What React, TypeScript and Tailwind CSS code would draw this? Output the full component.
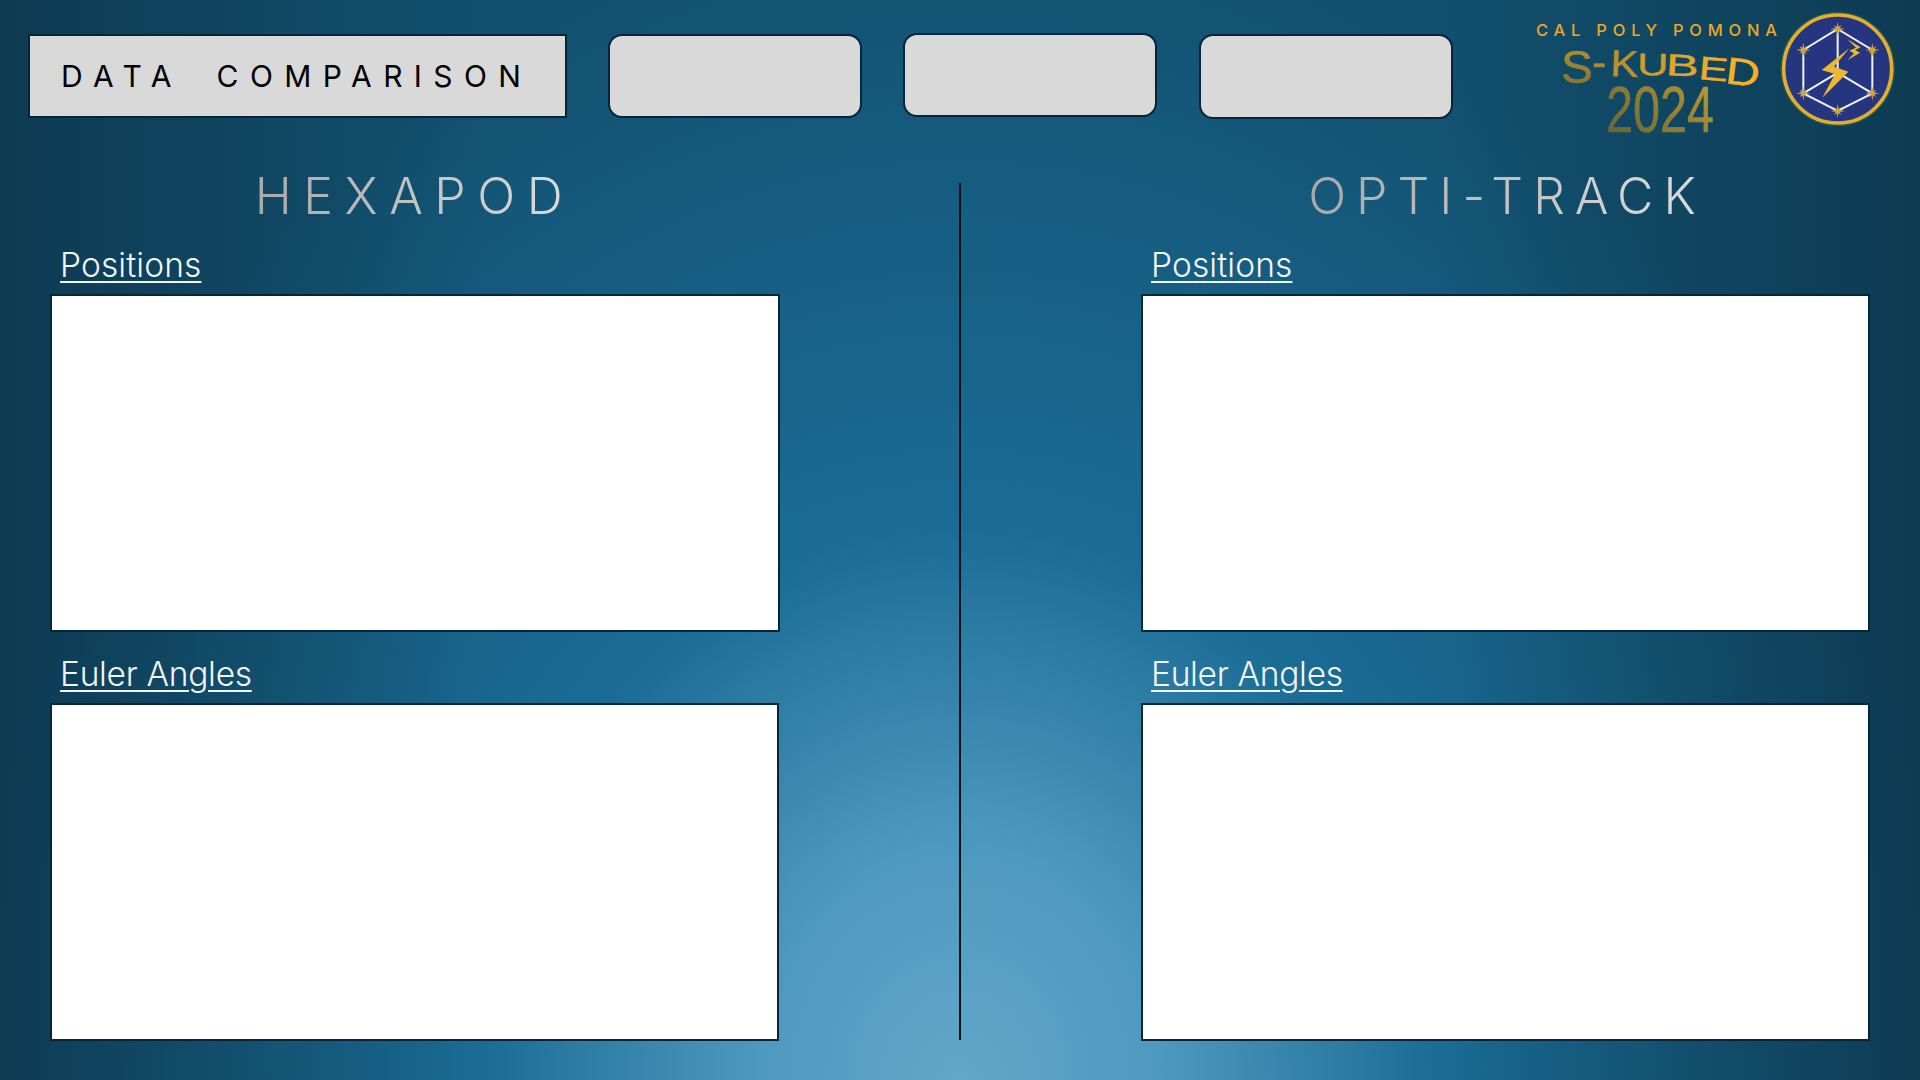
import React from "react";

// letras do S-KUBED: cada uma esticada para imitar o texto deformado
const kubedLetters = [
  { ch: "S", x: 31, y: 83, sx: 1.18, sy: 1.14, rot: 0, fill: "url(#kubedS)" },
  { ch: "-", x: 62, y: 76, sx: 1.05, sy: 1, rot: 0, fill: "#a98a30" },
  { ch: "K", x: 80, y: 76, sx: 1.05, sy: 0.93, rot: 2, fill: "#b8932d" },
  { ch: "U", x: 107, y: 75, sx: 1.08, sy: 0.78, rot: 1, fill: "#cd9e2a" },
  { ch: "B", x: 135.5, y: 75, sx: 1.23, sy: 0.76, rot: 3, fill: "#e0a728" },
  { ch: "E", x: 168, y: 79, sx: 1.1, sy: 0.82, rot: 5, fill: "#eeac26" },
  { ch: "D", x: 194.5, y: 83, sx: 1.18, sy: 0.94, rot: 7, fill: "#f5b025" },
];

const hexVertices = [
  [233, 87],
  [337, 150],
  [337, 280],
  [233, 333],
  [130, 280],
  [130, 150],
];

// estrela de 8 pontas usada nos vértices do hexágono
function starPoints(cx: number, cy: number) {
  const pts: string[] = [];
  for (let i = 0; i < 16; i++) {
    const r = i % 2 === 0 ? (i % 4 === 0 ? 22 : 16) : 7;
    const a = (i * Math.PI) / 8;
    pts.push(`${cx + r * Math.sin(a)},${cy - r * Math.cos(a)}`);
  }
  return pts.join(" ");
}

function Logo() {
  return (
    <svg width="370" height="140" viewBox="0 0 370 140" className="ml-[77px] shrink-0">
      <defs>
        <linearGradient id="kubedS" x1="0" y1="0" x2="0" y2="1">
          <stop offset="0" stopColor="#b8932e" />
          <stop offset="1" stopColor="#7d7034" />
        </linearGradient>
        <linearGradient id="year" x1="1" y1="0.2" x2="0" y2="1">
          <stop offset="0" stopColor="#bb972f" />
          <stop offset="1" stopColor="#5a6038" />
        </linearGradient>
      </defs>

      <text
        x="6"
        y="36"
        fill="#eaa925"
        fontFamily="Inter, sans-serif"
        fontSize="16.5"
        fontWeight="500"
        textLength="241"
      >
        CAL POLY POMONA
      </text>

      {kubedLetters.map((l) => (
        <text
          key={l.ch}
          transform={`translate(${l.x} ${l.y}) rotate(${l.rot}) scale(${l.sx} ${l.sy})`}
          fill={l.fill}
          stroke={l.fill}
          strokeWidth="0.5"
          fontFamily="'Liberation Sans', sans-serif"
          fontSize="40"
        >
          {l.ch}
        </text>
      ))}

      <text
        x="76"
        y="132"
        fill="url(#year)"
        stroke="url(#year)"
        strokeWidth="0.5"
        fontFamily="'Liberation Sans', sans-serif"
        fontSize="64"
        textLength="108"
        lengthAdjust="spacingAndGlyphs"
      >
        2024
      </text>

      {/* emblema */}
      <svg x="230" y="0" width="150" height="135" viewBox="0 0 450 405">
        <circle cx="233" cy="207" r="172" fill="#2d5f52" opacity="0.7" />
        <circle cx="233" cy="207" r="162" fill="#253580" stroke="#e3ae2b" strokeWidth="11" />
        <polygon
          points={hexVertices.map((v) => v.join(",")).join(" ")}
          fill="none"
          stroke="#f1f3f8"
          strokeWidth="6"
        />
        <path d="M233 87V218M130 280L233 218L337 280" fill="none" stroke="#f1f3f8" strokeWidth="6" />
        {hexVertices.map((v) => (
          <polygon key={v.join()} points={starPoints(v[0], v[1])} fill="#d1a733" />
        ))}
        <polygon points="268,145 185,210 225,222 187,293 265,215 222,200" fill="#eeb82c" />
        <polygon
          points="262,118 302,142 285,150 300,158 262,181 282,160 268,152 288,143"
          fill="#eeb82c"
        />
      </svg>
    </svg>
  );
}

function DataPanel({
  label,
  labelClass,
  className,
}: {
  label: string;
  labelClass?: string;
  className?: string;
}) {
  return (
    <div>
      <p
        className={`h-[52px] pl-[10px] text-[33.5px] leading-[46px] font-light text-[#f2f6f8] underline decoration-[1.5px] underline-offset-[4px] ${labelClass ?? ""}`}
      >
        {label}
      </p>
      <div className={`h-[338px] bg-white border-2 border-[#06243a] ${className ?? ""}`} />
    </div>
  );
}

function Column({
  title,
  titleClass,
  topPanelClass,
}: {
  title: string;
  titleClass: string;
  topPanelClass?: string;
}) {
  return (
    <div className="w-[729px] shrink-0">
      <div className="h-[102px] pt-[25px] text-center">
        <h2
          className={`inline-block bg-gradient-to-r from-[#a9a9a9] to-[#dcdcdc] bg-clip-text text-[50px] leading-[62px] font-light text-transparent ${titleClass}`}
        >
          {title}
        </h2>
      </div>
      <DataPanel label="Positions" labelClass="tracking-[0.1px]" className={topPanelClass} />
      <div className="mt-[19px]">
        <DataPanel label="Euler Angles" labelClass="tracking-[-0.3px]" />
      </div>
    </div>
  );
}

export default function App() {
  return (
    <div
      className="h-[1080px] w-[1920px] overflow-hidden bg-[linear-gradient(to_right,rgba(10,45,62,0.6)_0%,rgba(10,45,62,0)_25%,rgba(10,45,62,0)_75%,rgba(10,45,62,0.6)_100%),radial-gradient(ellipse_1000px_1160px_at_50%_100%,#62a7c9_0%,#4e99bf_20%,#1a6c95_48%,#125070_100%)]"
      style={{ fontFamily: "Inter, 'Noto Sans', sans-serif" }}
    >
      {/* barra superior */}
      <header className="flex h-[140px] items-start pl-[28px]">
        <div className="mt-[34px] flex h-[84px] w-[539px] items-center border-2 border-[#06243a] bg-[#d9d9d9] pl-[31px]">
          <span className="text-[30px] whitespace-pre tracking-[11.4px] [word-spacing:-3px] text-black">
            DATA  COMPARISON
          </span>
        </div>
        <button className="mt-[34px] ml-[41px] h-[84px] w-[254px] rounded-[14px] border-2 border-[#06243a] bg-[#d9d9d9]" />
        <button className="mt-[33px] ml-[41px] h-[84px] w-[254px] rounded-[14px] border-2 border-[#06243a] bg-[#d9d9d9]" />
        <button className="mt-[34px] ml-[42px] h-[85px] w-[254px] rounded-[14px] border-2 border-[#06243a] bg-[#d9d9d9]" />
        <Logo />
      </header>

      {/* colunas de dados */}
      <main className="flex pl-[50px]">
        <Column title="HEXAPOD" titleClass="tracking-[11.5px]" topPanelClass="w-[730px]" />
        <div className="ml-[180px] mt-[43px] h-[857px] w-[2px] bg-[#06131c]" />
        <div className="ml-[180px]">
          <Column title="OPTI-TRACK" titleClass="tracking-[10px] ml-[3px]" />
        </div>
      </main>
    </div>
  );
}
